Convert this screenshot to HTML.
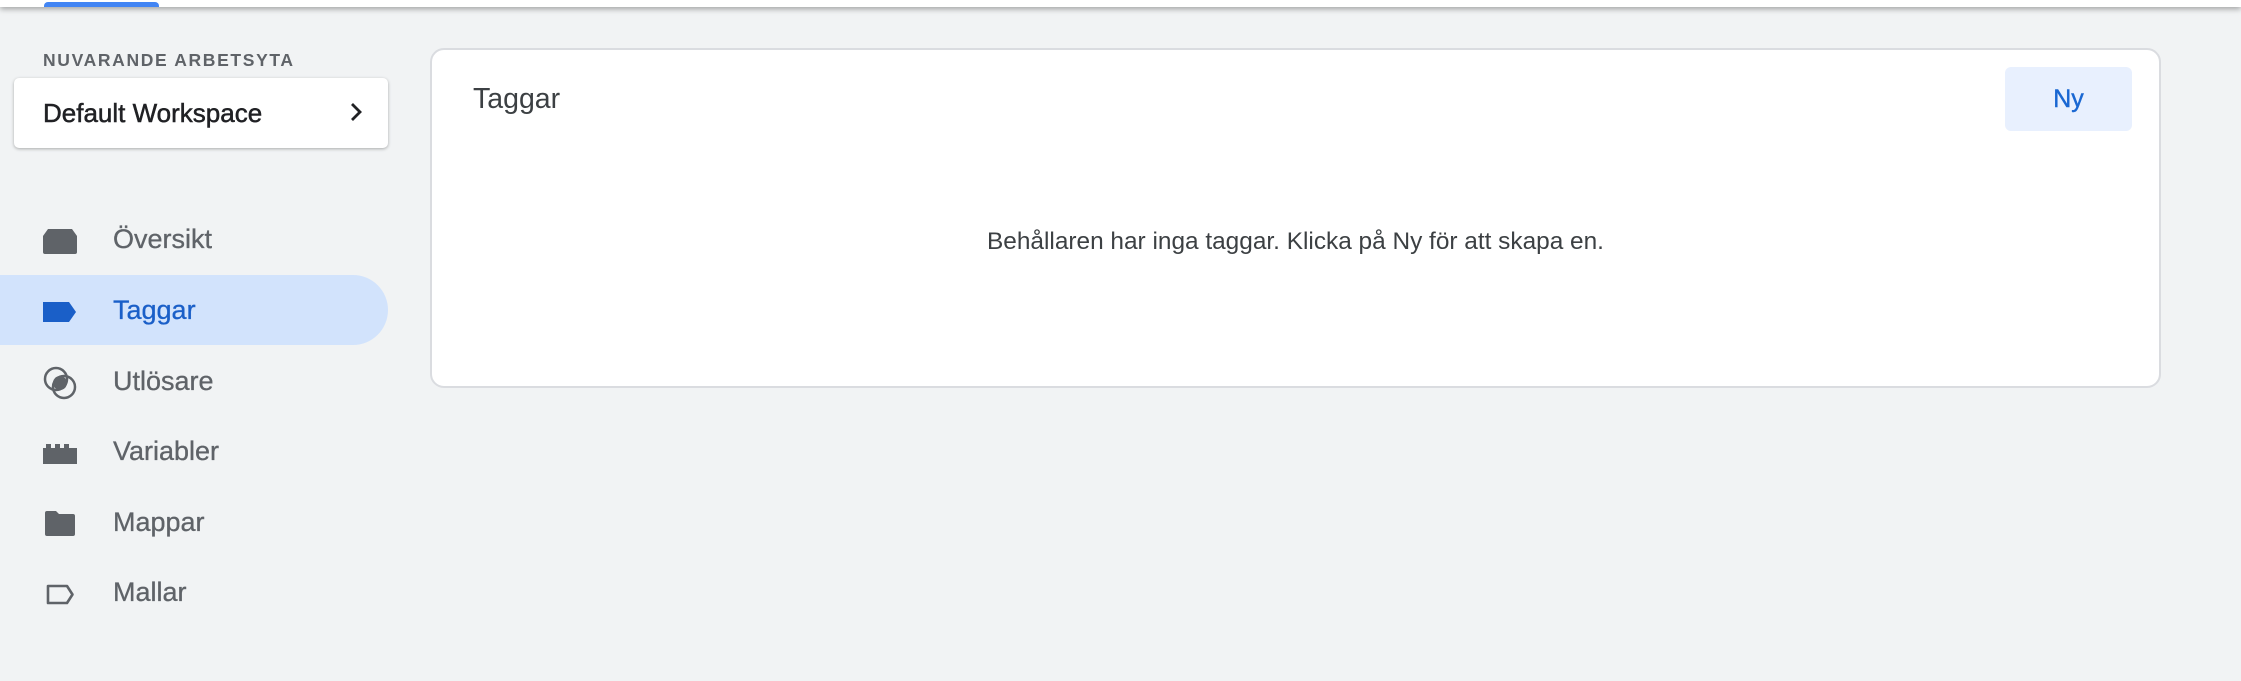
<!DOCTYPE html>
<html><head><meta charset="utf-8"><style>
*{margin:0;padding:0;box-sizing:border-box}
body{width:2241px;height:681px;background:#f1f3f4;font-family:"Liberation Sans",sans-serif;position:relative;overflow:hidden}
.top{position:absolute;left:0;top:0;width:2241px;height:7px;background:#fff;box-shadow:0 2px 6px rgba(0,0,0,.35)}
.tab{position:absolute;left:44px;top:2px;width:115px;height:5px;background:#4285f4;border-radius:4px 4px 0 0}
.lbl{position:absolute;left:43px;top:50px;font-size:17.5px;letter-spacing:1.65px;color:#5f6368;font-weight:bold}
.ws{position:absolute;left:14px;top:78px;width:374px;height:70px;background:#fff;border-radius:5px;box-shadow:0 1px 3px rgba(0,0,0,.3)}
.ws span{position:absolute;left:29px;top:20px;font-size:26px;color:#202124;-webkit-text-stroke:0.5px #202124}
.ws svg{position:absolute;left:330px;top:22px}
.nav{position:absolute;left:0;width:388px;height:70px}
.nav span{position:absolute;left:113px;top:20px;font-size:27px;color:#5f6368;-webkit-text-stroke:0.3px #5f6368}
.nav svg{position:absolute;left:43px}
.act{background:#d2e3fc;border-radius:0 35px 35px 0}
.act span{color:#1a5fc8;-webkit-text-stroke:0.3px #1a5fc8}
.card{position:absolute;left:430px;top:48px;width:1731px;height:340px;background:#fff;border:2px solid #dadce0;border-radius:14px}
.title{position:absolute;left:41px;top:33px;font-size:28.5px;color:#3c4043}
.ny{position:absolute;left:1573px;top:17px;width:127px;height:64px;background:#e8f0fe;border-radius:6px;color:#1967d2;font-size:25px;text-align:center;line-height:64px;-webkit-text-stroke:0.4px #1967d2}
.empty{position:absolute;left:0;right:0;top:178px;text-align:center;font-size:24.4px;color:#3c4043}
</style></head><body>
<div class="top"></div><div class="tab"></div>
<div class="lbl">NUVARANDE ARBETSYTA</div>
<div class="ws"><span>Default Workspace</span>
<svg width="24" height="24" viewBox="0 0 24 24"><path d="M8 4l8 8-8 8" fill="none" stroke="#202124" stroke-width="2.8"/></svg></div>

<div class="nav" style="top:204px"><svg style="top:25px" width="34" height="25" viewBox="0 0 34 25"><path d="M5 0h24l5 7v16a2 2 0 0 1-2 2H2a2 2 0 0 1-2-2V7z" fill="#5f6368"/></svg><span>Översikt</span></div>
<div class="nav act" style="top:275px"><svg style="top:27px" width="34" height="20" viewBox="0 0 34 20"><path d="M0 0h26l7 10-7 10H0z" fill="#1a5fc8"/></svg><span>Taggar</span></div>
<div class="nav" style="top:346px"><svg style="top:20px" width="34" height="34" viewBox="0 0 34 34"><circle cx="13" cy="13" r="11" fill="none" stroke="#5f6368" stroke-width="2.5"/><circle cx="21" cy="21" r="11" fill="none" stroke="#5f6368" stroke-width="2.5"/><circle cx="17" cy="17" r="7" fill="#5f6368"/></svg><span>Utlösare</span></div>
<div class="nav" style="top:416px"><svg style="top:27px" width="34" height="21" viewBox="0 0 34 21"><path d="M0 5h3V1h5v4h4V1h5v4h4V1h5v4h8v16H0z" fill="#5f6368"/></svg><span>Variabler</span></div>
<div class="nav" style="top:487px"><svg style="top:24px;left:45px" width="30" height="25" viewBox="0 0 30 25"><path d="M2 0h9l3 3h14a2 2 0 0 1 2 2v18a2 2 0 0 1-2 2H2a2 2 0 0 1-2-2V2a2 2 0 0 1 2-2z" fill="#5f6368"/></svg><span>Mappar</span></div>
<div class="nav" style="top:557px"><svg style="top:27px;left:46px" width="29" height="21" viewBox="0 0 29 21"><path d="M2 2h19l5.5 8.5L21 19H2z" fill="none" stroke="#5f6368" stroke-width="2.6" stroke-linejoin="round"/></svg><span>Mallar</span></div>

<div class="card">
<div class="title">Taggar</div>
<div class="ny">Ny</div>
<div class="empty">Behållaren har inga taggar. Klicka på Ny för att skapa en.</div>
</div>
</body></html>
